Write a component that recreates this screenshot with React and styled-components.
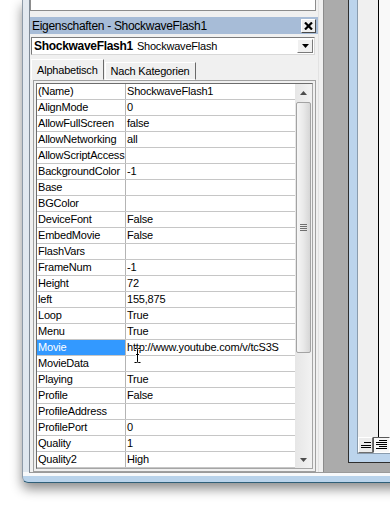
import React from 'react';
import styled, { createGlobalStyle } from 'styled-components';

const GlobalStyle = createGlobalStyle`
  html, body {
    margin: 0;
    padding: 0;
    background: #fff;
  }
  body {
    font-family: 'Liberation Sans', Arial, sans-serif;
    font-size: 11px;
    letter-spacing: -0.2px;
    color: #000;
  }
`;

const Page = styled.div`
  width: 390px;
  height: 513px;
  overflow: hidden;
  background: #fff;
  padding-left: 22px;
  box-sizing: border-box;
`;

const Frame = styled.div`
  width: 380px;
  border-left: 1px solid #8d9aa8;
  border-bottom: 1px solid #2f5f78;
  border-bottom-left-radius: 6px;
  background: linear-gradient(
    #e3e9f0,
    #dfe7ef calc(100% - 10px),
    #f7f9fb calc(100% - 10px),
    #f7f9fb calc(100% - 6px),
    #b9d3eb calc(100% - 6px)
  );
  padding: 0 0 9px 6px;
  box-shadow: 0 6px 12px rgba(0, 0, 0, 0.45);
`;

const Client = styled.div`
  display: flex;
  height: 472px;
  border-left: 1px solid #7f8a96;
  border-bottom: 1px solid #9a9a9a;
  background: #f0f0f0;
`;

/* ---------- property panel ---------- */

const Panel = styled.div`
  width: 288px;
  flex: none;
  display: flex;
  flex-direction: column;
  background: #f0f0f0;
`;

const TopBox = styled.div`
  height: 10px;
  margin-right: 2px;
  background: #fff;
  border: 1px solid #8c8c8c;
  border-top: none;
`;

const TitleBar = styled.div`
  margin-top: 6px;
  height: 17px;
  display: flex;
  align-items: center;
  justify-content: space-between;
  padding: 0 2px 0 2px;
  background: #a7bcd7;
  font-size: 12px;
  letter-spacing: -0.3px;
`;

const CloseButton = styled.div`
  width: 15px;
  height: 14px;
  box-sizing: border-box;
  display: flex;
  align-items: center;
  justify-content: center;
  background: #efefef;
  border: 1px solid;
  border-color: #fff #4a4a4a #4a4a4a #fff;
`;

const Combo = styled.div`
  margin: 3px 3px 0 1px;
  height: 18px;
  box-sizing: border-box;
  display: flex;
  align-items: center;
  padding-left: 2px;
  background: #fff;
  border: 1px solid;
  border-color: #7a7a7a #d8d8d8 #d8d8d8 #7a7a7a;
  white-space: nowrap;
`;

const ComboBold = styled.span`
  font-weight: bold;
  font-size: 12px;
  letter-spacing: -0.3px;
  margin-right: 4px;
`;

const DropButton = styled.div`
  margin-left: auto;
  margin-right: 1px;
  width: 16px;
  height: 14px;
  box-sizing: border-box;
  display: flex;
  align-items: center;
  justify-content: center;
  background: #f0f0f0;
  border: 1px solid;
  border-color: #fff #7a7a7a #7a7a7a #fff;
`;

const TabRow = styled.div`
  margin-top: 4px;
  height: 21px;
  display: flex;
  align-items: flex-end;
  padding-left: 1px;
`;

const Tab = styled.div`
  height: ${(p) => (p.$active ? 21 : 18)}px;
  box-sizing: border-box;
  display: flex;
  align-items: center;
  padding: 0 5px;
  background: #f0f0f0;
  border: 1px solid;
  border-color: #fff #6a6a6a ${(p) => (p.$active ? '#f0f0f0' : '#fff')} #fff;
  margin-left: ${(p) => (p.$active ? 0 : 1)}px;
`;

const Grid = styled.div`
  flex: 1;
  min-height: 0;
  margin: 0 2px 0 3px;
  padding: 2px;
  border: 1px solid #a0a0a0;
  display: flex;
`;

const GridInner = styled.div`
  flex: 1;
  display: flex;
  border: 1px solid;
  border-color: #6d6d6d #a5a5a5 #a5a5a5 #6d6d6d;
  overflow: hidden;
`;

const Rows = styled.div`
  flex: 1;
  position: relative;
  background: #fff;
  overflow: hidden;
`;

const Row = styled.div`
  display: flex;
  height: 16px;
  box-sizing: border-box;
  border-bottom: 1px solid #c6c6c6;
  line-height: 15px;
  white-space: nowrap;
`;

const NameCell = styled.div`
  width: 89px;
  flex: none;
  box-sizing: border-box;
  padding-left: 1px;
  border-right: 1px solid #b4b4b4;
  overflow: hidden;
  background: ${(p) => (p.$selected ? '#3399ff' : 'transparent')};
  color: ${(p) => (p.$selected ? '#fff' : '#000')};
`;

const ValueCell = styled.div`
  flex: 1;
  padding-left: 1px;
  overflow: hidden;
`;

const TextCursor = styled.svg`
  position: absolute;
  left: 96px;
  top: 264px;
`;

const ScrollBar = styled.div`
  width: 17px;
  flex: none;
  display: flex;
  flex-direction: column;
  background: linear-gradient(to right, #e6e6e6, #f2f2f2);
`;

const ScrollArrow = styled.div`
  height: 17px;
  flex: none;
  display: flex;
  align-items: center;
  justify-content: center;
`;

const Thumb = styled.div`
  height: 251px;
  margin: 1px 1px 0 1px;
  box-sizing: border-box;
  border: 1px solid #a3a3a3;
  border-radius: 2px;
  background: linear-gradient(to right, #f6f6f6, #e9e9e9 50%, #d6d6d6);
  display: flex;
  align-items: center;
  justify-content: center;
`;

const Track = styled.div`
  flex: 1;
`;

/* ---------- right side: splitter, MDI area, code window ---------- */

const Splitter = styled.div`
  width: 6px;
  flex: none;
  box-sizing: border-box;
  background: #f0f0f0;
  border-left: 1px solid #e2e2e2;
  border-right: 1px solid #8b8b8b;
`;

const MdiArea = styled.div`
  flex: 1;
  display: flex;
  align-items: flex-start;
  padding-left: 24px;
  background: #ababab;
`;

const ChildWindow = styled.div`
  flex: 1;
  height: 463px;
  box-sizing: border-box;
  display: flex;
  padding: 0 0 8px 8px;
  background: #bcd4ec;
  border-left: 1px solid #2e2e2e;
  border-bottom: 1px solid #2e2e2e;
`;

const ChildInner = styled.div`
  flex: 1;
  display: flex;
  flex-direction: column;
  background: #f0f0f0;
  border-left: 1px solid #8a9cae;
  border-bottom: 1px solid #8a9cae;
`;

const EditorRow = styled.div`
  flex: 1;
  display: flex;
`;

const Gutter = styled.div`
  width: 20px;
  flex: none;
  background: #f0f0f0;
`;

const CodeArea = styled.div`
  flex: 1;
  background: #f9f9f9;
  border-left: 1px solid #000;
`;

const ViewBar = styled.div`
  height: 16px;
  flex: none;
  display: flex;
`;

const ViewButton = styled.div`
  width: ${(p) => (p.$pressed ? 17 : 15)}px;
  height: 16px;
  box-sizing: border-box;
  display: flex;
  align-items: center;
  justify-content: center;
  background: ${(p) => (p.$pressed ? '#f7f7f7' : '#ececec')};
  border: 1px solid;
  border-color: ${(p) =>
    p.$pressed ? '#5a5a5a #fff #fff #5a5a5a' : '#fff #6e6e6e #6e6e6e #fff'};
`;

const props = [
  ['(Name)', 'ShockwaveFlash1'],
  ['AlignMode', '0'],
  ['AllowFullScreen', 'false'],
  ['AllowNetworking', 'all'],
  ['AllowScriptAccess', ''],
  ['BackgroundColor', '-1'],
  ['Base', ''],
  ['BGColor', ''],
  ['DeviceFont', 'False'],
  ['EmbedMovie', 'False'],
  ['FlashVars', ''],
  ['FrameNum', '-1'],
  ['Height', '72'],
  ['left', '155,875'],
  ['Loop', 'True'],
  ['Menu', 'True'],
  ['Movie', 'http://www.youtube.com/v/tcS3S'],
  ['MovieData', ''],
  ['Playing', 'True'],
  ['Profile', 'False'],
  ['ProfileAddress', ''],
  ['ProfilePort', '0'],
  ['Quality', '1'],
  ['Quality2', 'High'],
];

function App() {
  return (
    <Page>
      <GlobalStyle />
      <Frame>
        <Client>
          <Panel>
            <TopBox />
            <TitleBar>
              <span>Eigenschaften - ShockwaveFlash1</span>
              <CloseButton>
                <svg width="9" height="8" viewBox="0 0 9 8">
                  <path d="M1 0.5 L8 7.5 M8 0.5 L1 7.5" stroke="#000" strokeWidth="2.2" />
                </svg>
              </CloseButton>
            </TitleBar>

            <Combo>
              <ComboBold>ShockwaveFlash1</ComboBold>
              <span>ShockwaveFlash</span>
              <DropButton>
                <svg width="7" height="4" viewBox="0 0 7 4">
                  <path d="M0 0 H7 L3.5 4 Z" fill="#000" />
                </svg>
              </DropButton>
            </Combo>

            <TabRow>
              <Tab $active>Alphabetisch</Tab>
              <Tab>Nach Kategorien</Tab>
            </TabRow>

            <Grid>
              <GridInner>
                <Rows>
                  {props.map(([name, value]) => (
                    <Row key={name}>
                      <NameCell $selected={name === 'Movie'}>{name}</NameCell>
                      <ValueCell>{value}</ValueCell>
                    </Row>
                  ))}
                  <TextCursor width="9" height="15" viewBox="0 0 9 15">
                    <path
                      d="M1.5 0.5 H3.5 Q4.5 0.5 4.5 1.5 Q4.5 0.5 5.5 0.5 H7.5 M4.5 1.5 V13.5 M1.5 14.5 H3.5 Q4.5 14.5 4.5 13.5 Q4.5 14.5 5.5 14.5 H7.5 M2.5 6.5 H6.5"
                      fill="none"
                      stroke="#fff"
                      strokeWidth="2.5"
                    />
                    <path
                      d="M1.5 0.5 H3.5 Q4.5 0.5 4.5 1.5 Q4.5 0.5 5.5 0.5 H7.5 M4.5 1.5 V13.5 M1.5 14.5 H3.5 Q4.5 14.5 4.5 13.5 Q4.5 14.5 5.5 14.5 H7.5 M3 6.5 H6"
                      fill="none"
                      stroke="#000"
                      strokeWidth="1"
                    />
                  </TextCursor>
                </Rows>
                <ScrollBar>
                  <ScrollArrow>
                    <svg width="7" height="4" viewBox="0 0 7 4">
                      <path d="M3.5 0 L7 4 H0 Z" fill="#4d4d4d" />
                    </svg>
                  </ScrollArrow>
                  <Thumb>
                    <svg width="7" height="7" viewBox="0 0 7 7">
                      <path d="M0 0.5 H7 M0 2.5 H7 M0 4.5 H7 M0 6.5 H7" stroke="#6f6f6f" strokeWidth="1" />
                    </svg>
                  </Thumb>
                  <Track />
                  <ScrollArrow>
                    <svg width="7" height="4" viewBox="0 0 7 4">
                      <path d="M0 0 H7 L3.5 4 Z" fill="#4d4d4d" />
                    </svg>
                  </ScrollArrow>
                </ScrollBar>
              </GridInner>
            </Grid>
          </Panel>

          <Splitter />

          <MdiArea>
            <ChildWindow>
              <ChildInner>
                <EditorRow>
                  <Gutter />
                  <CodeArea />
                </EditorRow>
                <ViewBar>
                  <ViewButton>
                    <svg width="10" height="8" viewBox="0 0 10 8">
                      <path d="M3 1.5 H10 M0 4.5 H10 M0 6.5 H10" stroke="#000" strokeWidth="1" />
                    </svg>
                  </ViewButton>
                  <ViewButton $pressed>
                    <svg width="11" height="10" viewBox="0 0 11 10">
                      <path d="M3 0.5 H11 M0 2.5 H11 M0 4.5 H11 M3 6.5 H11 M0 8.5 H11" stroke="#000" strokeWidth="1" />
                    </svg>
                  </ViewButton>
                </ViewBar>
              </ChildInner>
            </ChildWindow>
          </MdiArea>
        </Client>
      </Frame>
    </Page>
  );
}

export default App;
